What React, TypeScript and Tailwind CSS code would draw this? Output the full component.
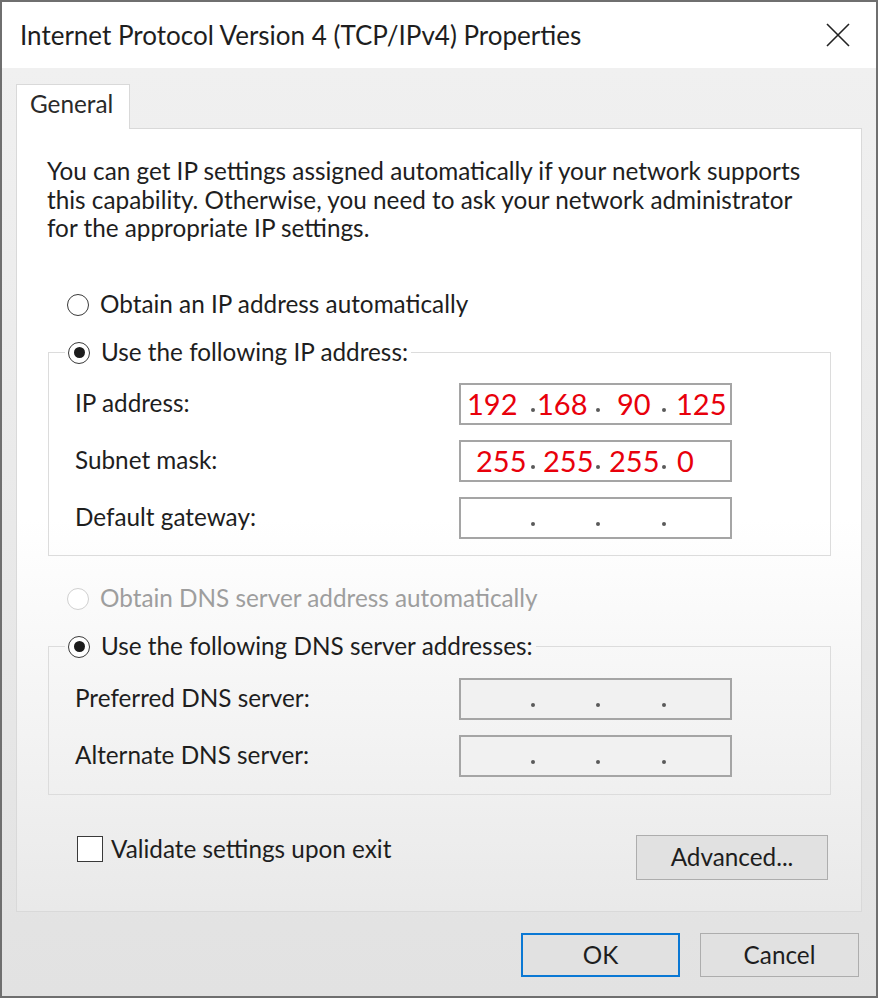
import React from "react";

type Seg = { text?: string; pad?: string };

function Radio({ checked, disabled, label }: { checked?: boolean; disabled?: boolean; label: string }) {
  return (
    <div className="flex items-center h-[30px]">
      <span
        className={`w-[22px] h-[22px] rounded-full border-[1.5px] bg-white flex items-center justify-center shrink-0 ${
          disabled ? "border-[#d0d0d0]" : "border-[#3a3a3a]"
        }`}>
        {checked && <span className="w-[11px] h-[11px] rounded-full bg-[#1c1c1c]" />}
      </span>
      <span className={`ml-[11px] whitespace-nowrap ${disabled ? "text-[#9e9e9e]" : "text-[#1e1e1e]"}`}>{label}</span>
    </div>
  );
}

function Dot() {
  return (
    <span className="w-[4px] flex items-end justify-center pb-[11px]">
      <span className="w-[4px] h-[4px] rounded-full bg-[#5a5a5a]" />
    </span>
  );
}

function IpField({ segs, filled = true }: { segs: Seg[]; filled?: boolean }) {
  const widths = ["w-[70px]", "w-[61px]", "w-[62px]", "w-[64px]"];
  return (
    <div
      className={`w-[273px] h-[42px] border-2 border-[#a5a5a5] flex items-stretch ${
        filled ? "bg-white" : "bg-[#f1f1f1]"
      }`}>
      {widths.map((w, i) => (
        <React.Fragment key={i}>
          <span className={`${w} flex items-center text-[29px] leading-none text-[#e8000b] ${segs[i]?.pad ?? ""}`}>
            {segs[i]?.text}
          </span>
          {i < 3 && <Dot />}
        </React.Fragment>
      ))}
    </div>
  );
}

function FieldRow({ label, segs, filled }: { label: string; segs: Seg[]; filled?: boolean }) {
  return (
    <div className="flex items-center h-[42px]">
      <span className="w-[384px] text-[#1e1e1e]">{label}</span>
      <IpField segs={segs} filled={filled} />
    </div>
  );
}

function Button({ label, primary }: { label: string; primary?: boolean }) {
  return (
    <div
      className={`w-[159px] h-[44px] bg-[#e1e1e1] flex items-center justify-center text-[#1e1e1e] ${
        primary ? "border-2 border-[#0a78d4]" : "border border-[#adadad]"
      }`}>
      {label}
    </div>
  );
}

export default function App() {
  return (
    <div className="w-[878px] h-[998px] border-2 border-[#6f6f6f] flex flex-col font-['Lato','Liberation_Sans',sans-serif] text-[24.3px] leading-[28.5px] overflow-hidden">
      {/* title bar */}
      <div className="h-[66px] bg-white flex items-center justify-between pl-[18px] pr-[26px] shrink-0">
        <span className="text-[#1e1e1e] text-[26px]">Internet Protocol Version 4 (TCP/IPv4) Properties</span>
        <svg width="24" height="24" viewBox="0 0 24 24" className="text-[#222]">
          <path d="M1 1L23 23M23 1L1 23" stroke="currentColor" strokeWidth="1.6" fill="none" />
        </svg>
      </div>

      {/* body */}
      <div className="flex-1 flex flex-col px-[14px] bg-linear-to-b from-[#f0f0f0] to-[#e2e2e2]">
        <div className="pt-[16px] flex">
          <div className="relative z-10 -mb-px w-[114px] h-[45px] bg-white border border-b-0 border-[#d9d9d9] pl-[13px] pt-[5px] text-[#2a2a2a]">
            General
          </div>
        </div>

        <div className="h-[784px] border border-[#d9d9d9] bg-linear-to-b from-white from-50% via-[#f4f4f4] via-75% to-[#e9e9e9] px-[30px] flex flex-col">
          <p className="mt-[28px] text-[#1e1e1e]">
            You can get IP settings assigned automatically if your network supports
            <br />
            this capability. Otherwise, you need to ask your network administrator
            <br />
            for the appropriate IP settings.
          </p>

          <div className="mt-[47px] ml-[20px]">
            <Radio label="Obtain an IP address automatically" />
          </div>

          <fieldset className="mt-[18px] ml-px border border-[#dcdcdc] pb-[16px]">
            <legend className="ml-[16px] px-[3px]">
              <Radio checked label="Use the following IP address:" />
            </legend>
            <div className="mt-[15px] pl-[26px] flex flex-col gap-[15px]">
              <FieldRow
                label="IP address:"
                segs={[
                  { text: "192", pad: "pl-[6px]" },
                  { text: "168", pad: "pl-[2px]" },
                  { text: "90", pad: "pl-[17px]" },
                  { text: "125", pad: "pl-[10px]" },
                ]}
              />
              <FieldRow
                label="Subnet mask:"
                segs={[
                  { text: "255", pad: "pl-[15px]" },
                  { text: "255", pad: "pl-[8px]" },
                  { text: "255", pad: "pl-[9px]" },
                  { text: "0", pad: "pl-[11px]" },
                ]}
              />
              <FieldRow label="Default gateway:" segs={[]} />
            </div>
          </fieldset>

          <div className="mt-[28px] ml-[20px]">
            <Radio disabled label="Obtain DNS server address automatically" />
          </div>

          <fieldset className="mt-[18px] ml-px border border-[#dcdcdc] pb-[17px]">
            <legend className="ml-[16px] px-[3px]">
              <Radio checked label="Use the following DNS server addresses:" />
            </legend>
            <div className="mt-[16px] pl-[26px] flex flex-col gap-[15px]">
              <FieldRow label="Preferred DNS server:" segs={[]} filled={false} />
              <FieldRow label="Alternate DNS server:" segs={[]} filled={false} />
            </div>
          </fieldset>

          <div className="mt-[40px] flex items-start justify-between pr-[3px]">
            <div className="flex items-center ml-[30px]">
              <span className="w-[26px] h-[26px] border-[1.5px] border-[#3a3a3a] bg-white" />
              <span className="ml-[8px] text-[#1e1e1e]">Validate settings upon exit</span>
            </div>
            <div className="w-[192px] h-[45px] bg-[#e1e1e1] border border-[#adadad] flex items-center justify-center text-[#1e1e1e]">
              Advanced...
            </div>
          </div>
        </div>

        <div className="mt-[21px] flex justify-end gap-[20px] pr-[3px]">
          <Button label="OK" primary />
          <Button label="Cancel" />
        </div>
      </div>
    </div>
  );
}
